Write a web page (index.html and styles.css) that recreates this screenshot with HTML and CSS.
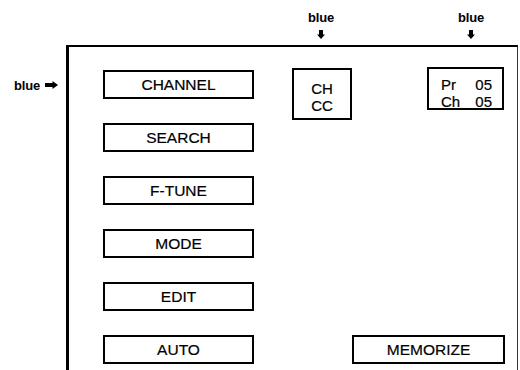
FILE: index.html
```html
<!DOCTYPE html>
<html lang="en">
<head>
    <meta charset="UTF-8">
    <meta name="viewport" content="width=device-width, initial-scale=1.0">
    <title>Channel Setup Menu</title>
    <link rel="stylesheet" href="styles.css">
</head>
<body>
    <div class="page">
        <div class="corner"></div>

        <!-- colour notes above the screen -->
        <div class="top-notes">
            <div class="note note-ch">
                <span>blue</span>
                <svg class="arrow-down" width="8" height="9" viewBox="0 0 8 9"><path d="M2 0h4v4.5h2L4 9 0 4.5h2z"/></svg>
            </div>
            <div class="note note-pr">
                <span>blue</span>
                <svg class="arrow-down" width="8" height="9" viewBox="0 0 8 9"><path d="M2 0h4v4.5h2L4 9 0 4.5h2z"/></svg>
            </div>
        </div>

        <div class="side-note">
            <span>blue</span>
            <svg class="arrow-right" width="13" height="8" viewBox="0 0 13 8"><path d="M0 2h7.5V0L13 4 7.5 8V6H0z"/></svg>
        </div>

        <!-- the screen -->
        <div class="screen">
            <div class="menu">
                <div class="item">CHANNEL</div>
                <div class="item">SEARCH</div>
                <div class="item">F-TUNE</div>
                <div class="item">MODE</div>
                <div class="item">EDIT</div>
                <div class="item">AUTO</div>
            </div>

            <div class="side">
                <div class="info-row">
                    <div class="band">CH<br>CC</div>
                    <div class="prog">
                        <span>Pr</span><span>05</span>
                        <span>Ch</span><span>05</span>
                    </div>
                </div>
                <div class="item memorize">MEMORIZE</div>
            </div>
        </div>
    </div>
</body>
</html>
```

FILE: styles.css
```css
/* Channel menu sketch */
body {
    margin: 0;
    background: #fff;
    color: #000;
    font-family: 'Liberation Sans', Arial, sans-serif;
    overflow: hidden;
}

.page {
    display: grid;
    grid-template-columns: 66px 1fr;
    grid-template-rows: 45px auto;
    width: 520px;
    height: 370px;
}

.note,
.side-note {
    font-size: 13px;
    font-weight: bold;
    letter-spacing: -0.2px;
}

.top-notes {
    display: flex;
    align-items: flex-start;
    padding-top: 10px;
}

.note {
    width: 40px;
    display: flex;
    flex-direction: column;
    align-items: center;
    line-height: 16px;
}

.note-ch {
    margin-left: 235px;
}

.note-pr {
    margin-left: 110px;
}

.arrow-down {
    margin-top: 4px;
    fill: #000;
}

.side-note {
    display: flex;
    align-items: center;
    gap: 5px;
    padding: 32px 0 0 14px;
    height: 16px;
}

.arrow-right {
    fill: #000;
}

.screen {
    box-sizing: border-box;
    width: 452px;
    height: 325px;
    border-top: 2px solid #000;
    border-left: 3px solid #000;
    border-right: 1px solid #333;
    padding: 20px 0 0 34px;
    display: flex;
}

.menu {
    display: flex;
    flex-direction: column;
    gap: 24px;
    margin-top: 3px;
}

.item {
    box-sizing: border-box;
    width: 151px;
    height: 29px;
    border: 2px solid #000;
    display: flex;
    align-items: center;
    justify-content: center;
    font-size: 15.5px;
    -webkit-text-stroke: 0.2px #000;
}

.side {
    display: flex;
    flex-direction: column;
    margin-left: 38px;
}

.info-row {
    display: flex;
    align-items: flex-start;
}

.band {
    box-sizing: border-box;
    width: 60px;
    height: 52px;
    margin-top: 1px;
    border: 2px solid #000;
    padding-top: 10px;
    text-align: center;
    font-size: 15px;
    line-height: 17px;
    -webkit-text-stroke: 0.2px #000;
}

.prog {
    box-sizing: border-box;
    width: 77px;
    height: 43px;
    margin-left: 75px;
    border: 2px solid #000;
    padding: 8px 10px 0 12px;
    display: grid;
    grid-template-columns: 1fr auto;
    font-size: 15px;
    line-height: 16.5px;
    -webkit-text-stroke: 0.2px #000;
}

.memorize {
    width: 153px;
    margin: auto 0 6px 60px;
}
```
